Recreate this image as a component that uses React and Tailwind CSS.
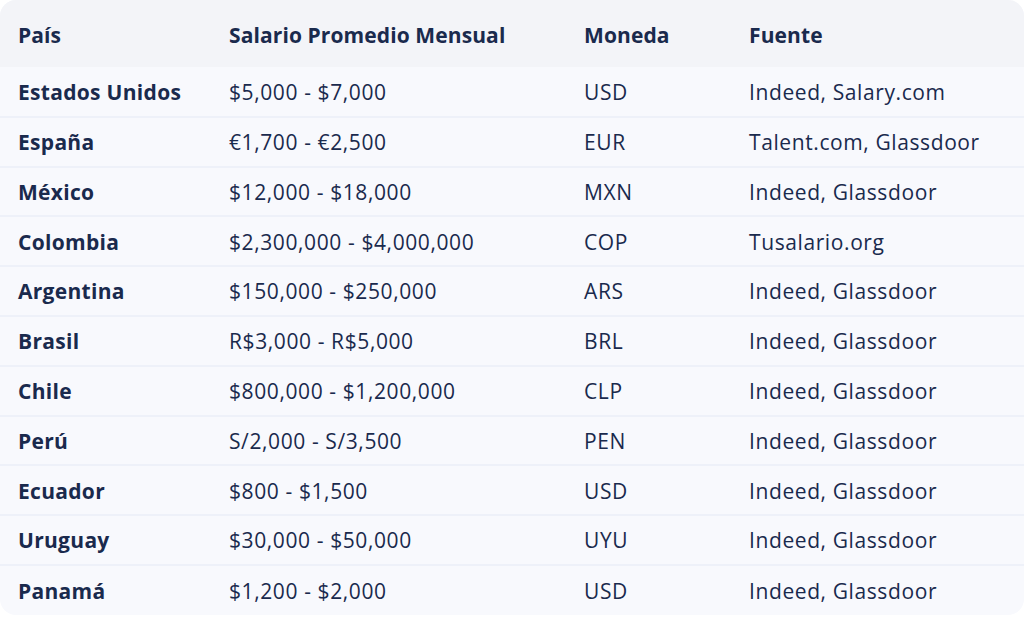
const rows = [
  ["Estados Unidos", "$5,000 - $7,000", "USD", "Indeed, Salary.com"],
  ["España", "€1,700 - €2,500", "EUR", "Talent.com, Glassdoor"],
  ["México", "$12,000 - $18,000", "MXN", "Indeed, Glassdoor"],
  ["Colombia", "$2,300,000 - $4,000,000", "COP", "Tusalario.org"],
  ["Argentina", "$150,000 - $250,000", "ARS", "Indeed, Glassdoor"],
  ["Brasil", "R$3,000 - R$5,000", "BRL", "Indeed, Glassdoor"],
  ["Chile", "$800,000 - $1,200,000", "CLP", "Indeed, Glassdoor"],
  ["Perú", "S/2,000 - S/3,500", "PEN", "Indeed, Glassdoor"],
  ["Ecuador", "$800 - $1,500", "USD", "Indeed, Glassdoor"],
  ["Uruguay", "$30,000 - $50,000", "UYU", "Indeed, Glassdoor"],
  ["Panamá", "$1,200 - $2,000", "USD", "Indeed, Glassdoor"],
];

export default function App() {
  return (
    <div className="w-[1024px] h-[617px] bg-white" style={{ fontFamily: "'Open Sans', 'Noto Sans', sans-serif" }}>
      <div className="rounded-2xl overflow-hidden bg-[#f8f9fd] text-[#1a2a4d] text-[21px]">
        <table className="w-full border-collapse">
          <colgroup>
            <col className="w-[211px]" />
            <col className="w-[355px]" />
            <col className="w-[165px]" />
            <col />
          </colgroup>
          <thead>
            <tr className="bg-[#f3f4f8] h-[67px] tracking-[0.1px]">
              <th className="text-left font-bold pl-[18px] pr-2 pt-[4px]">País</th>
              <th className="text-left font-bold pl-[18px] pr-2 pt-[4px]">Salario Promedio Mensual</th>
              <th className="text-left font-bold pl-[18px] pr-2 pt-[4px]">Moneda</th>
              <th className="text-left font-bold pl-[18px] pr-2 pt-[4px]">Fuente</th>
            </tr>
          </thead>
          <tbody>
            {rows.map((r, i) => (
              <tr key={i} className={`h-[49.8px] tracking-[0.6px] ${i > 0 ? "border-t-2 border-[#eef1f9]" : ""}`}>
                <td className="pl-[18px] pr-2 pt-[2px] font-bold tracking-[0.3px]">{r[0]}</td>
                <td className="pl-[18px] pr-2 pt-[2px]">{r[1]}</td>
                <td className="pl-[18px] pr-2 pt-[2px]">{r[2]}</td>
                <td className="pl-[18px] pr-2 pt-[2px]">{r[3]}</td>
              </tr>
            ))}
          </tbody>
        </table>
      </div>
    </div>
  );
}
